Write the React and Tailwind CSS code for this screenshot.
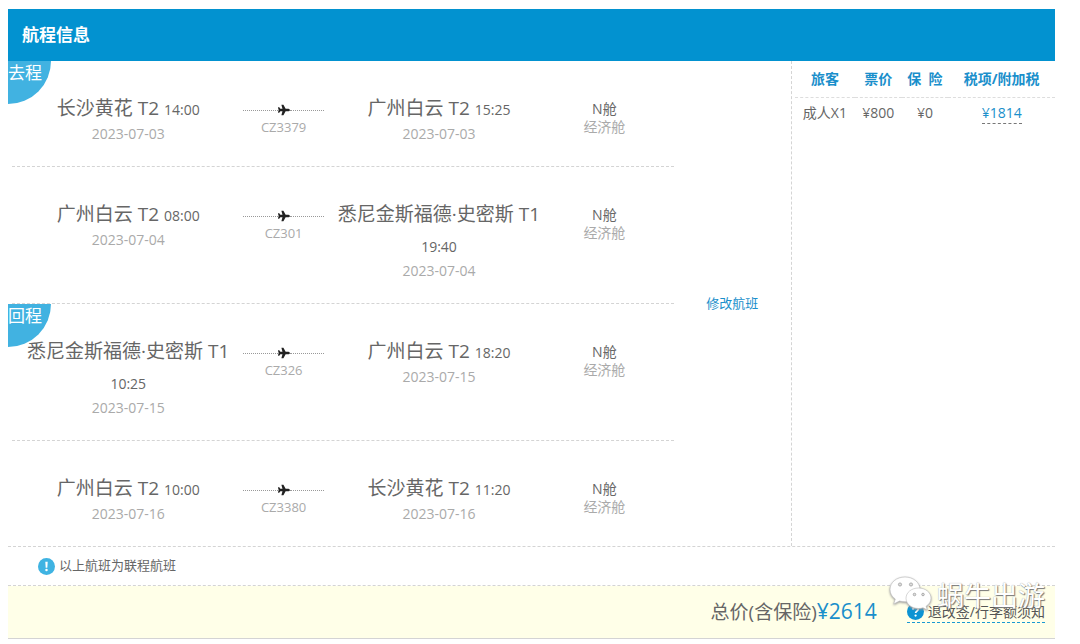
import React from 'react';
import { FaPlane } from 'react-icons/fa';

const SEGMENTS = [
  { badge: '去程', from: '长沙黄花 T2', depTime: '14:00', depDate: '2023-07-03', flight: 'CZ3379', to: '广州白云 T2', arrTime: '15:25', arrDate: '2023-07-03' },
  { from: '广州白云 T2', depTime: '08:00', depDate: '2023-07-04', flight: 'CZ301', to: '悉尼金斯福德·史密斯 T1', arrTime: '19:40', arrDate: '2023-07-04' },
  { badge: '回程', from: '悉尼金斯福德·史密斯 T1', depTime: '10:25', depDate: '2023-07-15', flight: 'CZ326', to: '广州白云 T2', arrTime: '18:20', arrDate: '2023-07-15' },
  { from: '广州白云 T2', depTime: '10:00', depDate: '2023-07-16', flight: 'CZ3380', to: '长沙黄花 T2', arrTime: '11:20', arrDate: '2023-07-16' },
];

const FEES = [
  { passenger: '成人X1', fare: '¥800', insurance: '¥0', tax: '¥1814' },
];

function Stop({ name, time, date }) {
  return (
    <div className="text-center">
      <div className="-mx-1 text-[19px] leading-[31px] text-[#666]">
        <span className="whitespace-nowrap">{name}</span>{' '}
        <span className="text-sm leading-none">{time}</span>
      </div>
      <div className="text-sm leading-5 text-[#aaa]">{date}</div>
    </div>
  );
}

function Segment({ segment, last }) {
  return (
    <div className="relative pl-1">
      {segment.badge && (
        <div className="absolute left-0 top-0 w-[43px] h-[43px] rounded-br-full bg-[#41b2e1] text-white text-[17px] leading-6 whitespace-nowrap">
          {segment.badge}
        </div>
      )}
      <div className={`relative pl-4 pr-1 pt-8 pb-[22px] grid grid-cols-[minmax(0,200fr)_minmax(0,110fr)_minmax(0,200fr)_minmax(0,130fr)] ${last ? '' : 'border-b border-dashed border-[#d4d4d4]'}`}>
        <Stop name={segment.from} time={segment.depTime} date={segment.depDate} />
        <div className="pt-[11px] px-[15px] text-center">
          <div className="flex items-center">
            <span className="flex-1 border-t border-dotted border-[#999]" />
            <FaPlane size={12} className="text-[#222]" />
            <span className="flex-1 border-t border-dotted border-[#999]" />
          </div>
          <div className="mt-[3px] text-[13px] leading-4 text-[#aaa]">{segment.flight}</div>
        </div>
        <Stop name={segment.to} time={segment.arrTime} date={segment.arrDate} />
        <div className="pt-[7px] text-center text-sm leading-[18px]">
          <div className="text-[#666]">N舱</div>
          <div className="text-[#aaa]">经济舱</div>
        </div>
      </div>
    </div>
  );
}

function FeeTable() {
  return (
    <table className="w-full table-fixed text-center text-sm text-[#666]">
      <thead>
        <tr className="h-9 border-b border-dashed border-[#ddd] text-[#1a8fcb] whitespace-nowrap">
          <th className="w-[23%] font-bold">旅客</th>
          <th className="w-[18%] font-bold">票价</th>
          <th className="w-[18%] font-bold">保&nbsp;&nbsp;险</th>
          <th className="font-bold">税项/附加税</th>
        </tr>
      </thead>
      <tbody>
        {FEES.map((fee) => (
          <tr key={fee.passenger} className="h-8">
            <td>{fee.passenger}</td>
            <td>{fee.fare}</td>
            <td>{fee.insurance}</td>
            <td>
              <a href="#tax" className="inline-block border-b border-dashed border-[#777] leading-5 text-[#1a8fcb]">{fee.tax}</a>
            </td>
          </tr>
        ))}
      </tbody>
    </table>
  );
}

// WeChat bubbles with the account name
function Watermark() {
  return (
    <div className="absolute right-[10px] top-[-10px] flex items-start gap-1 pointer-events-none">
      <svg width="44" height="36" viewBox="0 0 44 36" fill="#fff" stroke="#bbb" strokeWidth="0.6" className="drop-shadow-[0_1px_1px_#999]">
        <path d="M16 1C7.500 1 1 6.500 1 13.500c0 4 2 7.300 5.300 9.500L4.700 28l5.800-3c1.800.5 3.600.8 5.500.8 8.500 0 15-5.500 15-12.300S24.500 1 16 1z" />
        <path d="M29.500 12C22.500 12 17 16.500 17 22.200s5.500 10.300 12.500 10.300c1.600 0 3.100-.2 4.500-.7l4.300 2.200-1.200-3.800c3-1.900 4.900-4.700 4.900-8C42 16.500 36.500 12 29.500 12z" />
        <g fill="#ddd" stroke="#888">
          <circle cx="11" cy="8.500" r="1.600" />
          <circle cx="22" cy="8.500" r="1.600" />
          <circle cx="25.500" cy="18.500" r="1.300" />
          <circle cx="34" cy="18.500" r="1.300" />
        </g>
      </svg>
      <span className="pt-1 text-[27px] leading-8 text-white [text-shadow:1px_1px_1px_#777,0_0_1px_#999]">蜗牛出游</span>
    </div>
  );
}

export default function App() {
  return (
    <div className="pl-2 pr-[25px] pt-[9px] bg-white font-['Open_Sans','Noto_Sans_CJK_SC',sans-serif]">
      <h1 className="h-[52px] flex items-center px-[14px] bg-[#0292d0] text-white text-[17px] font-bold">航程信息</h1>

      <div className="flex">
        <div className="flex-1 flex items-center">
          <div className="w-[85%]">
            {SEGMENTS.map((segment, i) => (
              <Segment key={segment.flight} segment={segment} last={i === SEGMENTS.length - 1} />
            ))}
          </div>
          <div className="flex-1 text-center text-[13px]">
            <a href="#change" className="text-[#1a8fcb]">修改航班</a>
          </div>
        </div>
        <div className="w-[264px] shrink-0 pl-[3px] border-l border-dashed border-[#d4d4d4]">
          <FeeTable />
        </div>
      </div>

      <div className="h-10 flex items-center gap-1 pl-[30px] border-y border-dashed border-[#d4d4d4] text-[13px] text-[#666]">
        <svg width="17" height="17" viewBox="0 0 18 18">
          <circle cx="9" cy="9" r="9" fill="#3fb3e2" />
          <path d="M7.700 4h2.600l-.4 6.200H8.100z" fill="#fff" />
          <circle cx="9" cy="12.700" r="1.300" fill="#fff" />
        </svg>
        <span>以上航班为联程航班</span>
      </div>

      <div className="relative h-[53px] flex items-center justify-end pr-[10px] bg-[#ffffe8] border-b border-[#d4d4d4]">
        <div className="flex items-center mr-[30px] text-[#666]">
          <span className="text-[19px]">总价(含保险)</span>
          <span className="text-[21px] text-[#1a8fcb]">¥2614</span>
        </div>
        <a href="#rules" className="flex items-center gap-1 border-b border-dashed border-[#1a9ad2] text-sm leading-5 text-[#555]">
          <svg width="17" height="17" viewBox="0 0 18 18">
            <circle cx="9" cy="9" r="9" fill="#0c93d3" />
            <path d="M6.300 7c0-3.600 5.500-3.500 5.500-.3 0 1.800-2.700 2-2.700 4" fill="none" stroke="#fff" strokeWidth="1.800" />
            <circle cx="9.100" cy="13.300" r="1.200" fill="#fff" />
          </svg>
          退改签/行李额须知
        </a>
        <Watermark />
      </div>
    </div>
  );
}
